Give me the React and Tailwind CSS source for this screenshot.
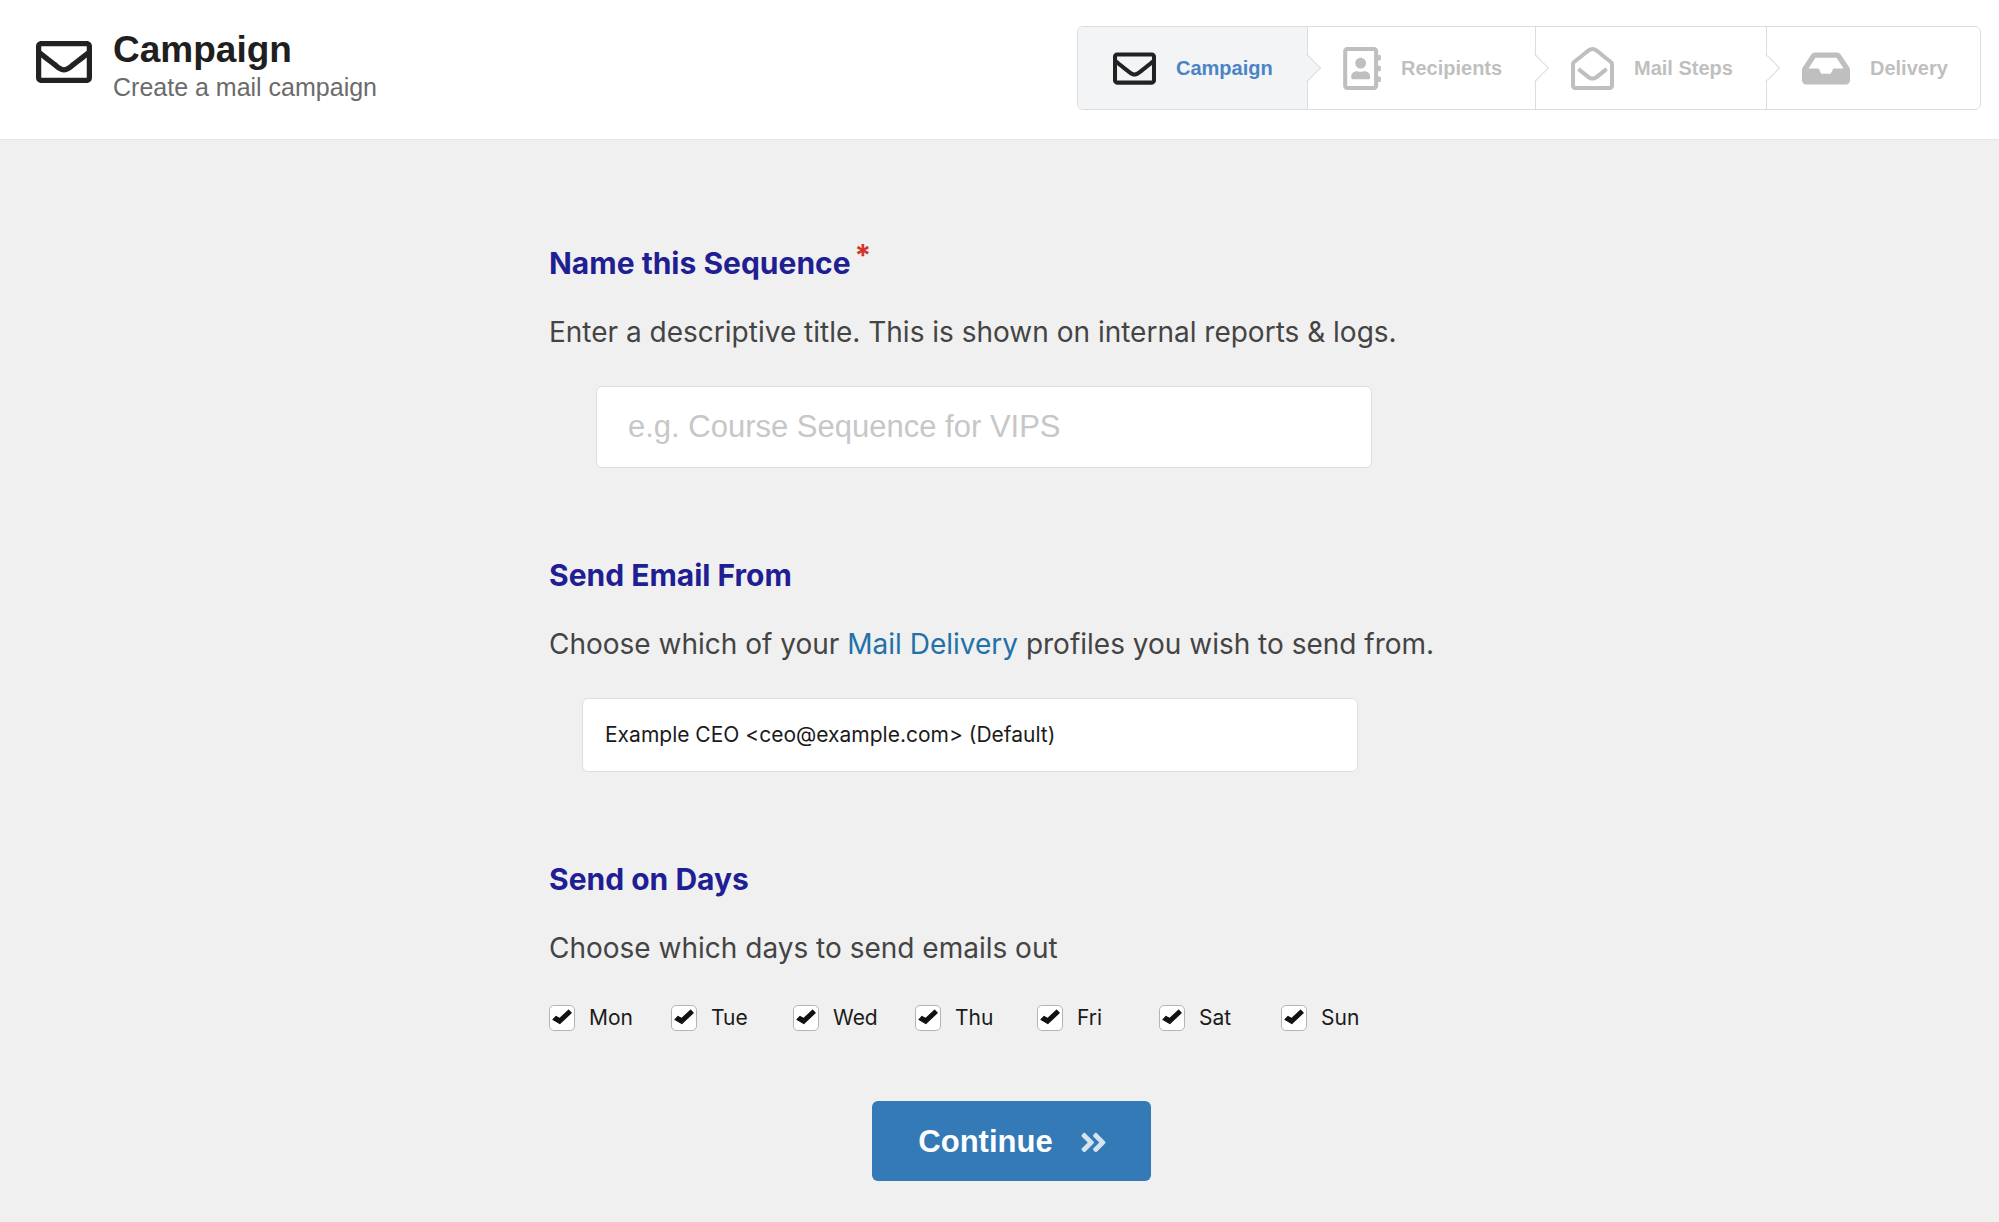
import { useState } from 'react'
import {
  FaAngleDoubleRight,
  FaInbox,
  FaRegAddressBook,
  FaRegEnvelope,
  FaRegEnvelopeOpen,
} from 'react-icons/fa'

const STEPS = [
  { id: 'campaign', label: 'Campaign', icon: FaRegEnvelope, iconWidth: 'w-[43px]' },
  { id: 'recipients', label: 'Recipients', icon: FaRegAddressBook, iconWidth: 'w-[38px]' },
  { id: 'steps', label: 'Mail Steps', icon: FaRegEnvelopeOpen, iconWidth: 'w-[43px]' },
  { id: 'delivery', label: 'Delivery', icon: FaInbox, iconWidth: 'w-12' },
]

const DAYS = ['Mon', 'Tue', 'Wed', 'Thu', 'Fri', 'Sat', 'Sun']

function StepBar({ current }) {
  return (
    <nav aria-label="Progress" className="w-[904px] rounded-md border border-[#dcddde] bg-white">
      <ol className="grid h-[82px] grid-cols-[230fr_228fr_231fr_213fr]">
        {STEPS.map(({ id, label, icon: Icon, iconWidth }, index) => {
          const isActive = id === current
          const isLast = index === STEPS.length - 1
          return (
            <li
              key={id}
              aria-current={isActive ? 'step' : undefined}
              className={`relative flex items-center gap-5 pl-[35px] ${isLast ? '' : 'border-r border-[#dcddde]'} ${
                isActive ? 'rounded-l-md bg-[#f3f4f5]' : ''
              }`}
            >
              <Icon
                aria-hidden="true"
                className={`h-[43px] shrink-0 ${iconWidth} ${isActive ? 'text-[#222222]' : 'text-[#bfbfbf]'}`}
              />
              <span className={`text-[20px] font-bold ${isActive ? 'text-[#4b84c6]' : 'text-[#bfbfbf]'}`}>{label}</span>
              {!isLast && (
                <span
                  aria-hidden="true"
                  className={`absolute top-1/2 right-0 z-10 size-5 translate-x-1/2 -translate-y-1/2 rotate-[-45deg] border-r border-b border-[#dcddde] ${
                    isActive ? 'bg-[#f3f4f5]' : 'bg-white'
                  }`}
                />
              )}
            </li>
          )
        })}
      </ol>
    </nav>
  )
}

function Section({ title, htmlFor, required, description, children }) {
  const Heading = htmlFor ? 'label' : 'h2'
  return (
    <section>
      <Heading htmlFor={htmlFor} className="flex text-[30px]/[36px] font-bold text-[#1f1f93]">
        {title}
        {required && <span className="ml-1 text-[30px]/[20px] text-[#d0342c]">*</span>}
      </Heading>
      <p className="mt-[34px] text-[28px]/[34px] text-[#444444]">{description}</p>
      <div className="mt-[37px]">{children}</div>
    </section>
  )
}

function CheckMark({ className }) {
  return (
    <svg viewBox="0 0 20 16" fill="currentColor" aria-hidden="true" className={className}>
      <path
        d="M1 10.6 4 7.4 7.6 9.6 16.6 1.2 19.2 3.8 7.8 14.6Z"
        stroke="currentColor"
        strokeWidth="1.2"
        strokeLinejoin="round"
      />
    </svg>
  )
}

function DayCheckbox({ day, checked, onChange }) {
  return (
    <label className="flex w-[122px] items-center gap-[14px] text-[21px]/[32px] text-[#1b1b1b]">
      <span className="relative size-[26px]">
        <input
          type="checkbox"
          checked={checked}
          onChange={onChange}
          className="block size-[26px] appearance-none rounded-[5px] border border-[#b4b4b4] bg-white"
        />
        {checked && <CheckMark className="pointer-events-none absolute top-1 left-[3px] h-4 w-5 text-[#111111]" />}
      </span>
      {day}
    </label>
  )
}

export default function App() {
  const [name, setName] = useState('')
  const [days, setDays] = useState(DAYS)

  const toggleDay = day => {
    setDays(prev => (prev.includes(day) ? prev.filter(d => d !== day) : [...prev, day]))
  }

  return (
    <div className="min-h-screen bg-[#f0f0f0] font-['Inter',sans-serif]">
      <header className="flex items-start justify-between border-b border-[#e6e6e6] bg-white pt-[26px] pr-[18px] pb-[29px] pl-9 font-['Liberation_Sans',sans-serif]">
        <div className="flex items-start gap-[21px] pt-0.5">
          <FaRegEnvelope aria-hidden="true" className="mt-1.5 size-14 text-[#222222]" />
          <div>
            <h1 className="text-[37px]/[44px] font-bold text-[#1f1f1f]">Campaign</h1>
            <p className="text-[25px]/[30px] text-[#6b6b6b]">Create a mail campaign</p>
          </div>
        </div>
        <StepBar current="campaign" />
      </header>

      <main className="mx-auto max-w-[949px] pt-[105px] pb-10 pl-6">
        <form className="flex flex-col gap-[89px]" onSubmit={e => e.preventDefault()}>
          <Section
            title="Name this Sequence"
            htmlFor="sequence-name"
            required
            description="Enter a descriptive title. This is shown on internal reports & logs."
          >
            <input
              id="sequence-name"
              type="text"
              value={name}
              onChange={e => setName(e.target.value)}
              placeholder="e.g. Course Sequence for VIPS"
              className="ml-[47px] block h-[82px] w-[776px] rounded-md border border-[#dededf] bg-white px-[31px] font-['Liberation_Sans',sans-serif] text-[31px] text-[#222222] placeholder:text-[#c7c7c7]"
            />
          </Section>

          <Section
            title="Send Email From"
            htmlFor="send-from"
            description={
              <>
                Choose which of your <a href="#mail-delivery" className="text-[#2271a8]">Mail Delivery</a> profiles you wish to send from.
              </>
            }
          >
            <select
              id="send-from"
              className="ml-[33px] block h-[74px] w-[776px] appearance-none rounded-md border border-[#dededf] bg-white px-[22px] text-[21px] text-[#1b1b1b]"
            >
              <option>Example CEO &lt;ceo@example.com&gt; (Default)</option>
            </select>
          </Section>

          <div>
            <Section title="Send on Days" description="Choose which days to send emails out">
              <div className="flex">
                {DAYS.map(day => (
                  <DayCheckbox key={day} day={day} checked={days.includes(day)} onChange={() => toggleDay(day)} />
                ))}
              </div>
            </Section>

            <div className="mt-[67px] flex justify-center">
              <button
                type="submit"
                className="flex h-20 items-center gap-[27px] rounded-md bg-[#337ab7] pt-0.5 pr-[44px] pl-[46px] font-['Liberation_Sans',sans-serif] text-[31px] font-bold text-white"
              >
                Continue
                <FaAngleDoubleRight aria-hidden="true" className="h-[31px] w-[27px] opacity-80" />
              </button>
            </div>
          </div>
        </form>
      </main>
    </div>
  )
}
